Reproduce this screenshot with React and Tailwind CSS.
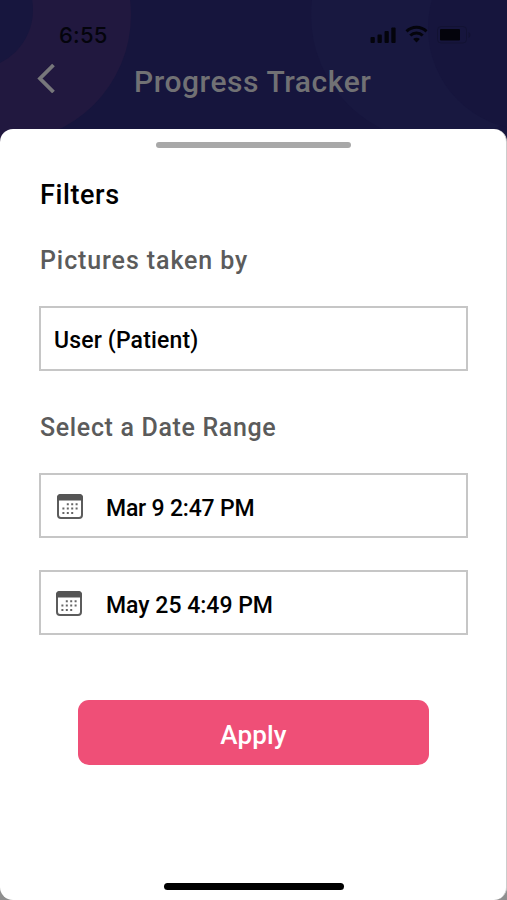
import React from 'react';

function StatusIcons() {
  return (
    <svg width="104" height="22" viewBox="0 0 104 22" fill="none">
      <g fill="#04040c">
        <rect x="1.500" y="13" width="4.300" height="6" rx="1" />
        <rect x="8.500" y="10.500" width="4.300" height="8.500" rx="1" />
        <rect x="15.500" y="7" width="4.300" height="12" rx="1" />
        <rect x="22.300" y="3.500" width="4.300" height="15.500" rx="1" />
        <path d="M47.500 18.500L44.200 15a4.700 4.700 0 0 1 6.600 0Z" />
        <rect x="71" y="5" width="20" height="11.500" rx="1" />
      </g>
      <path d="M37.500 8.400a14.300 14.300 0 0 1 20 0M41.300 12.500a8.900 8.900 0 0 1 12.400 0" transform="translate(0 -1)" stroke="#04040c" strokeWidth="3" />
      <rect x="68.500" y="2.500" width="29" height="16.500" rx="3.500" stroke="#121233" />
      <path d="M99.500 8c2.500 1 2.500 5 0 6Z" fill="#121233" />
    </svg>
  );
}

function CalendarIcon() {
  return (
    <svg className="mt-px" width="26" height="25" viewBox="0 0 26 25" fill="none">
      <rect x="1" y="1" width="24" height="23" rx="3" stroke="#5c5c5c" strokeWidth="2" />
      <path d="M0 6.500V4a4 4 0 0 1 4-4h18a4 4 0 0 1 4 4v2.500Z" fill="#555" />
      <g stroke="#666" strokeWidth="2" strokeDasharray="2 2.400">
        <path d="M9.800 10.200h11" />
        <path d="M5.400 14.600h15.400" />
        <path d="M5.400 19h11" />
      </g>
    </svg>
  );
}

function DateField({ children, className }) {
  return (
    <button className={`flex h-[65px] w-full items-center border-2 border-[#c6c6c6] text-left text-[23px] font-medium ${className}`}>
      <CalendarIcon />
      <span className="pt-[7px]">{children}</span>
    </button>
  );
}

export default function App() {
  return (
    <div className="flex h-[900px] w-[507px] flex-col overflow-hidden bg-[#8f8f8f] font-['Roboto',sans-serif] text-black">
      <header className="relative -mb-4 h-[145px] shrink-0 overflow-hidden bg-[#16153d]">
        {/* background circles */}
        <svg className="absolute inset-0" width="507" height="145">
          <circle cx="4" cy="15" r="127" fill="#21183f" />
          <circle cx="-26" cy="10" r="59" fill="#17163e" />
          <circle cx="438" cy="15" r="127" fill="#181840" />
          <circle cx="530" cy="28" r="102" fill="#16153d" />
        </svg>
        <div className="relative flex items-center justify-between pt-[23px] pr-[34px] pl-[59px]">
          <span className="font-['Inter',sans-serif] text-[22px] leading-6 font-medium tracking-[0.2px] text-[#04040c]">6:55</span>
          <StatusIcons />
        </div>
        <div className="relative flex items-center pt-[13px] pl-[37px]">
          <svg className="-mt-1" width="18" height="30" viewBox="0 0 18 30" fill="none">
            <path d="M16.500 2L3 15.500L16.500 29" stroke="#77777b" strokeWidth="3.800" />
          </svg>
          <h1 className="pt-1 pl-[79px] text-[30px] leading-9 font-medium tracking-[0.55px] whitespace-nowrap text-[#717174]">Progress Tracker</h1>
        </div>
      </header>

      <main className="relative flex flex-1 flex-col rounded-[13px] border-r border-[#ccc] bg-white pr-[38px] pl-[39px]">
        <div className="mt-[13px] ml-[117px] h-[6px] w-[195px] shrink-0 rounded-full bg-[#a8a8a8]" />
        <h2 className="mt-[31px] pl-px text-[27px] leading-8 font-medium tracking-[0.6px]">Filters</h2>
        <h3 className="mt-[34px] pl-px text-[25px] leading-8 font-medium tracking-[0.9px] text-[#5b5b5b]">Pictures taken by</h3>
        <button className="mt-[29px] flex h-[65px] items-center border-2 border-[#c6c6c6] pt-[6px] pl-[13px] text-left text-[23px] font-medium tracking-[0.15px]">
          User (Patient)
        </button>
        <h3 className="mt-[41px] pl-px text-[25px] leading-8 font-medium tracking-[0.65px] text-[#5b5b5b]">Select a Date Range</h3>
        <DateField className="mt-[29px] gap-[23px] pl-[16px] tracking-[-0.2px]">Mar 9 2:47 PM</DateField>
        <DateField className="mt-[32px] gap-[24px] pl-[15px]">May 25 4:49 PM</DateField>
        <button className="mx-[39px] mt-[65px] h-[65px] rounded-[11px] bg-[#ef4f77] pt-[6px] text-[26px] font-medium tracking-[0.2px] text-white">
          Apply
        </button>
        <div className="mt-auto mb-[10px] ml-[125px] h-[7px] w-[180px] rounded-full bg-black" />
      </main>
    </div>
  );
}
